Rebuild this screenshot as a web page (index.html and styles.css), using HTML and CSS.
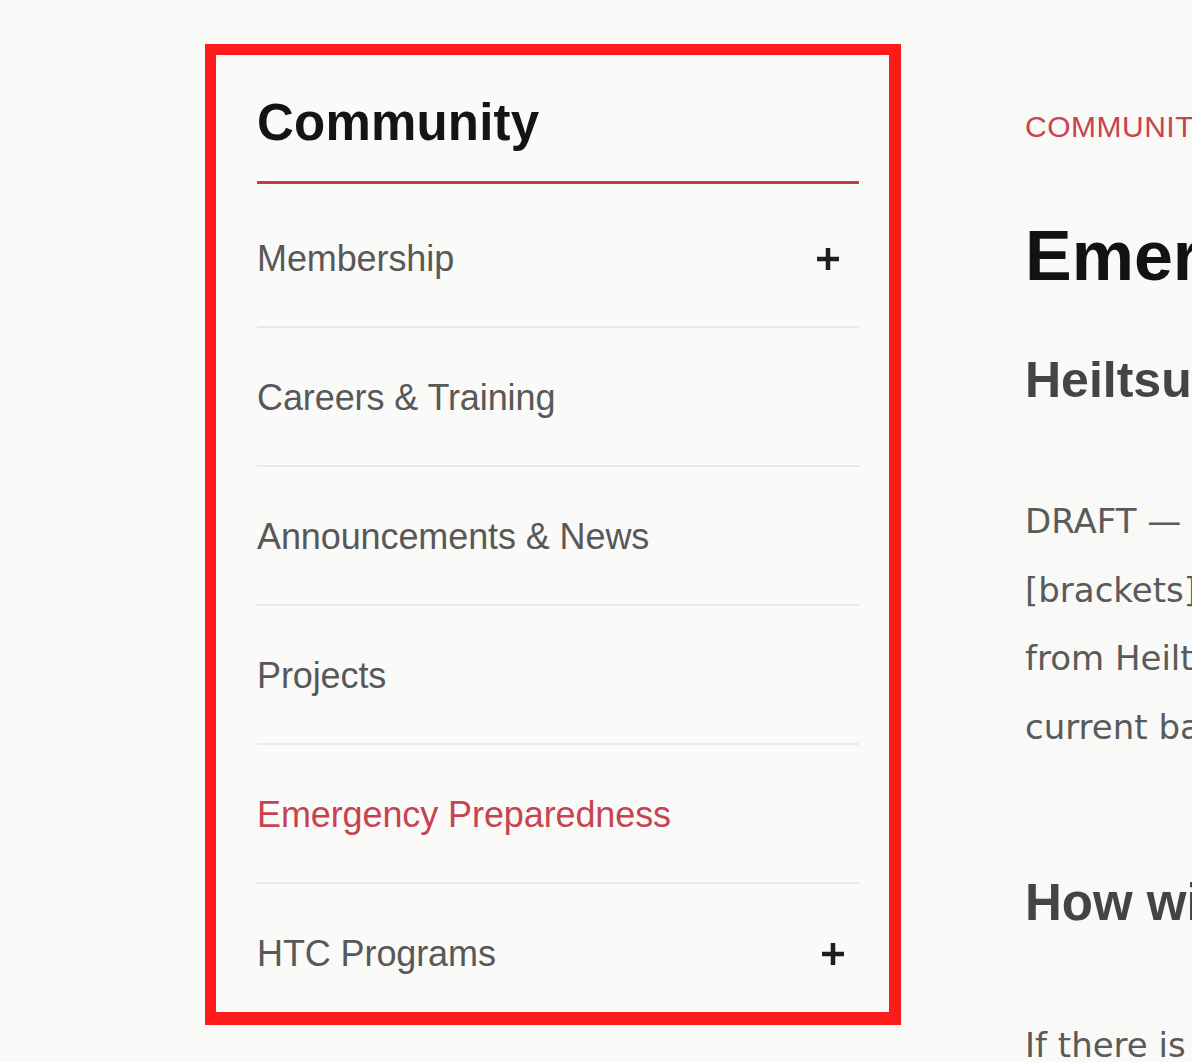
FILE: index.html
```html
<!DOCTYPE html>
<html lang="en">
<head>
    <meta charset="UTF-8">
    <meta name="viewport" content="width=device-width, initial-scale=1.0">
    <title>Emergency Preparedness - Community</title>
    <link rel="stylesheet" href="styles.css">
</head>
<body>
    <div class="page_wrap">

        <aside class="side_nav">
            <h2 class="side_title">Community</h2>
            <ul class="side_list">
                <li class="side_item">
                    <a href="#" class="side_link">Membership</a>
                    <button class="side_toggle" aria-label="expand">
                        <svg width="24" height="24" viewBox="0 0 24 24"><path d="M12 1v22M1 12h22" stroke="currentColor" stroke-width="4.5" fill="none"/></svg>
                    </button>
                </li>
                <li class="side_item">
                    <a href="#" class="side_link">Careers &amp; Training</a>
                </li>
                <li class="side_item">
                    <a href="#" class="side_link">Announcements &amp; News</a>
                </li>
                <li class="side_item">
                    <a href="#" class="side_link">Projects</a>
                </li>
                <li class="side_item">
                    <a href="#" class="side_link current">Emergency Preparedness</a>
                </li>
                <li class="side_item">
                    <a href="#" class="side_link">HTC Programs</a>
                    <button class="side_toggle last_toggle" aria-label="expand">
                        <svg width="24" height="24" viewBox="0 0 24 24"><path d="M12 1v22M1 12h22" stroke="currentColor" stroke-width="4.5" fill="none"/></svg>
                    </button>
                </li>
            </ul>
        </aside>

        <main class="main_content">
            <p class="eyebrow">COMMUNITY</p>
            <h1 class="page_title">Emergency Preparedness</h1>
            <h2 class="sub_title">Heiltsuk Nation Emergency Plan</h2>
            <p class="body_text">
                DRAFT — content shown here is placeholder<br>
                [brackets] mark details still to be confirmed<br>
                from Heiltsuk Tribal Council staff and the<br>
                current band emergency coordinator.
            </p>
            <h2 class="sub_title section_title">How will I be notified in an emergency?</h2>
            <p class="body_text">If there is an emergency in the community, alerts</p>
        </main>

    </div>
</body>
</html>
```

FILE: styles.css
```css
* {
  margin: 0;
  padding: 0;
  box-sizing: border-box;
}

body {
  background-color: #f9f9f7;
  font-family: "Liberation Sans", Arial, sans-serif;
  overflow: hidden;
  height: 1062px;
}

.page_wrap {
  display: flex;
  align-items: flex-start;
  gap: 124px;
  padding-top: 44px;
  padding-left: 205px;
}

/* sidebar ---------- */
.side_nav {
  flex: none;
  width: 696px;
  height: 981px;
  border: 11px solid #fe1b1b;
  border-right-width: 12px;
  border-bottom-width: 13px;
  padding: 37px 30px 0 41px;
  background-color: #fafaf8;
  overflow: hidden;
}

.side_title {
  font-size: 51px;
  line-height: 61px;
  font-weight: bold;
  letter-spacing: 0.2px;
  color: #141414;
  padding-bottom: 28px;
  border-bottom: 3px solid #bd3c48;
}

.side_list {
  list-style: none;
  margin-top: 5px;
}

.side_item {
  display: flex;
  align-items: center;
  justify-content: space-between;
  padding: 48px 0 45px 0;
  border-bottom: 2px solid #e9e9e6;
}

.side_item:last-child {
  border-bottom: none;
}

.side_link {
  font-size: 36px;
  line-height: 44px;
  letter-spacing: -0.1px;
  color: #585858;
  text-decoration: none;
}

.side_link.current {
  color: #c8434f;
}

.side_toggle {
  display: flex;
  background: none;
  border: none;
  color: #1e1e1e;
  margin-right: 19px;
  cursor: pointer;
}

.last_toggle {
  margin-right: 14px;
}

/* main ---------- */
.main_content {
  flex: none;
  width: 900px;
  padding-top: 65px;
}

.eyebrow {
  font-size: 30px;
  line-height: 36px;
  letter-spacing: 0.5px;
  color: #c9434f;
}

.page_title {
  margin-top: 71px;
  font-size: 70px;
  line-height: 80px;
  font-weight: bold;
  color: #121212;
  white-space: nowrap;
}

.sub_title {
  margin-top: 55px;
  font-size: 50px;
  line-height: 58px;
  font-weight: bold;
  color: #444;
  white-space: nowrap;
}

.body_text {
  margin-top: 78px;
  font-family: "DejaVu Sans", Verdana, sans-serif;
  font-size: 34px;
  line-height: 68.5px;
  color: #5a5a5a;
  white-space: nowrap;
}

.section_title {
  margin-top: 112px;
  font-size: 51px;
  line-height: 60px;
}
```
